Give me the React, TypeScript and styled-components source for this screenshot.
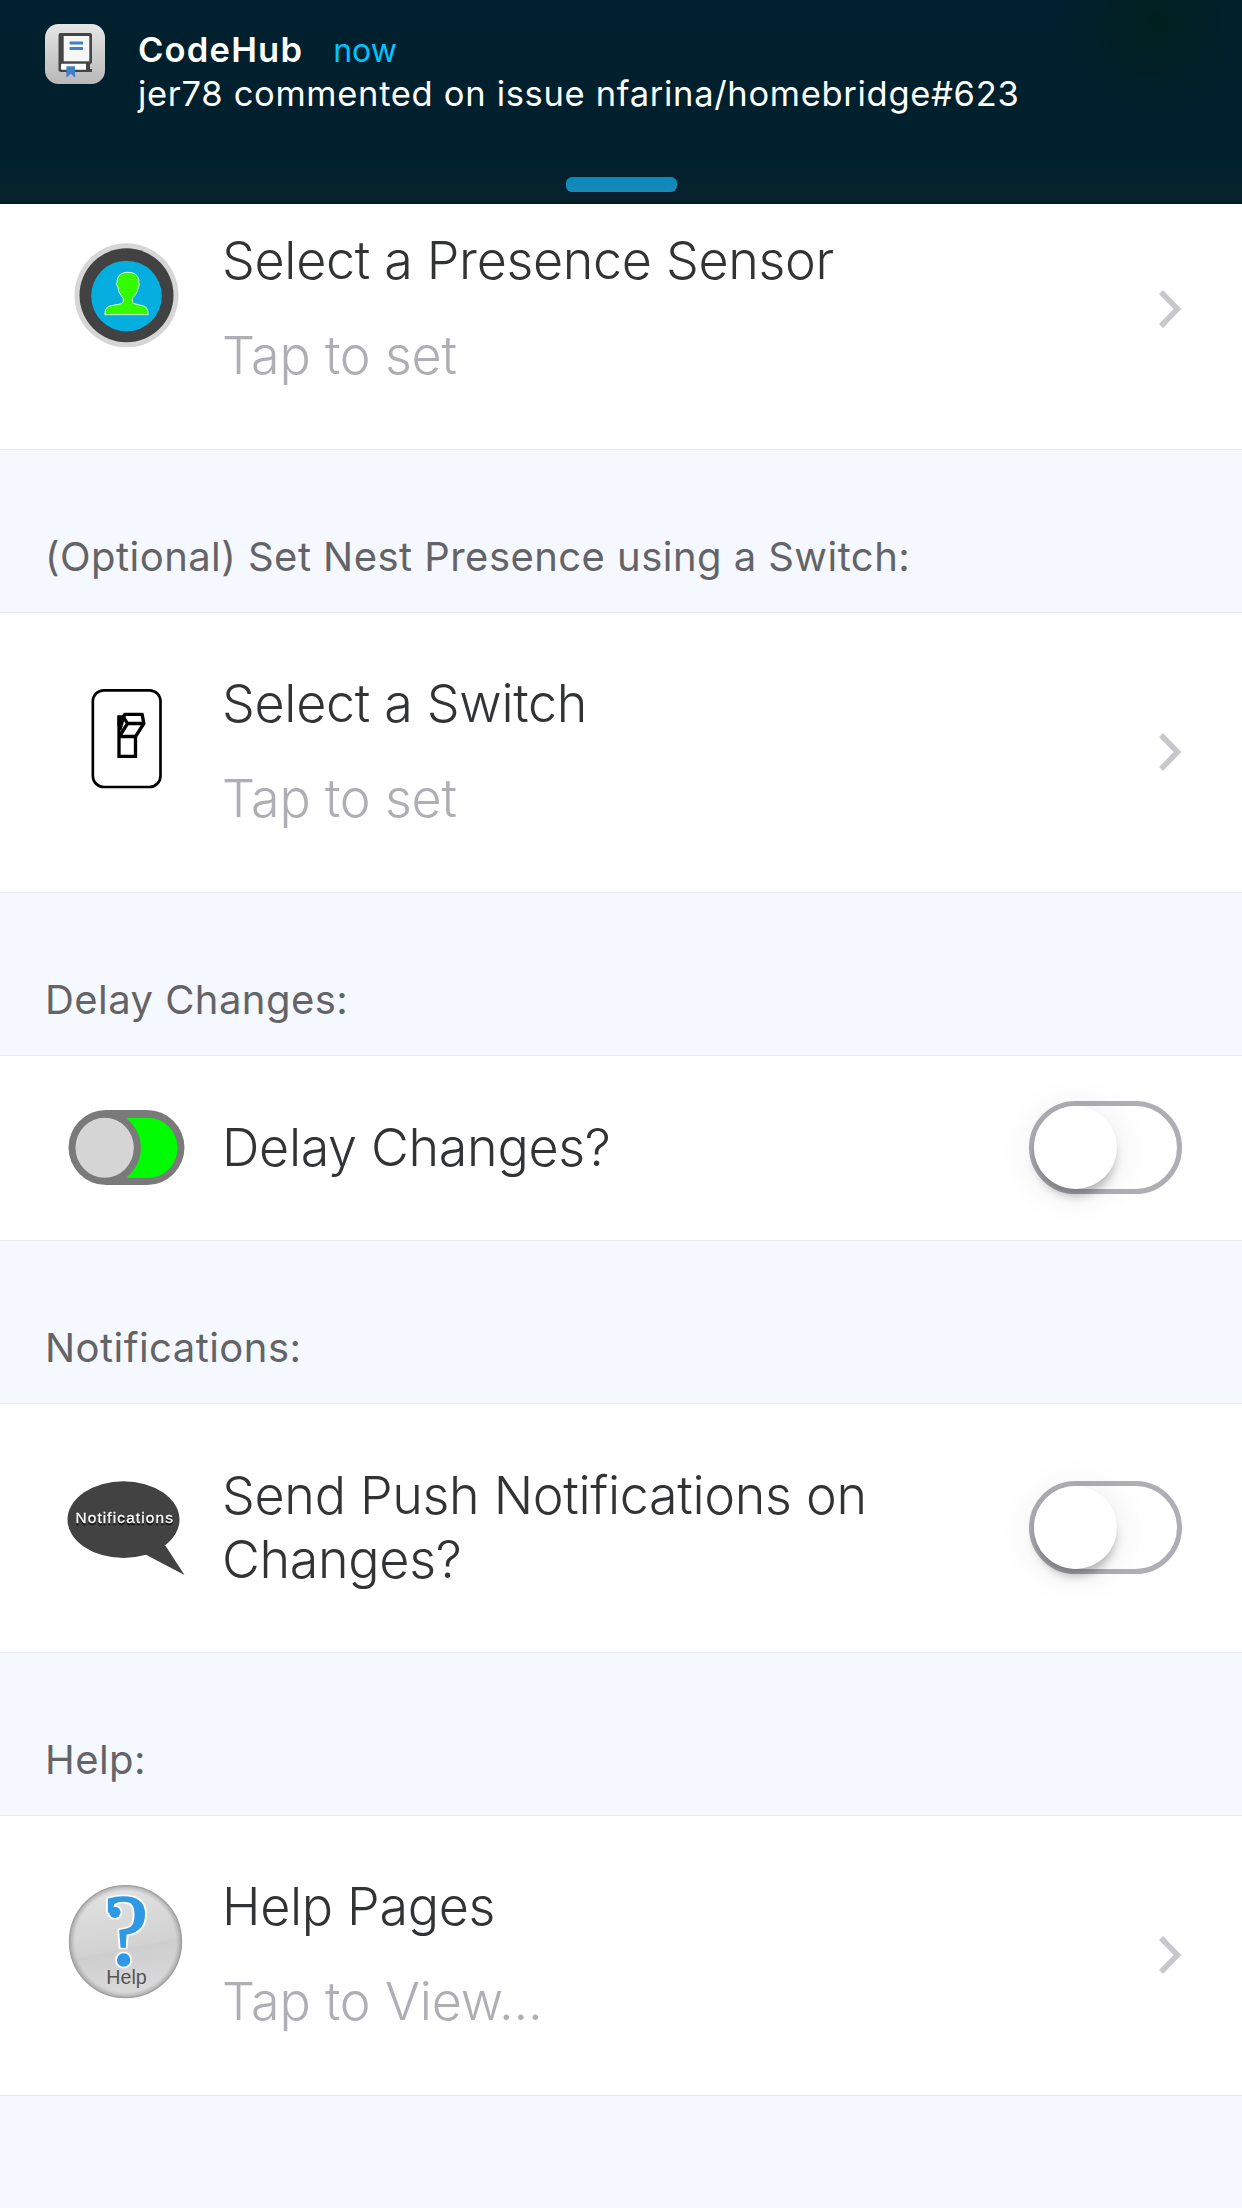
import React from "react";
import styled, { createGlobalStyle } from "styled-components";

const GlobalStyle = createGlobalStyle`
  body {
    margin: 0;
    background: #f5f8ff;
    font-family: Inter, "Liberation Sans", sans-serif;
  }
`;

const Screen = styled.main`
  width: 1242px;
  height: 2208px;
  overflow: hidden;
  background: #f5f8ff;
`;

const Banner = styled.header`
  position: relative;
  z-index: 1;
  box-sizing: border-box;
  height: 204px;
  padding: 24px 45px 12px;
  display: flex;
  flex-direction: column;
  justify-content: space-between;
  background:
    radial-gradient(circle 95px at 1157px 22px, #00201f 0%, #00202200 100%),
    linear-gradient(#00202f 0%, #00202e 75%, #07222c 98%, #001820 100%);
`;

const BannerContent = styled.div`
  display: flex;
  gap: 33px;
`;

const BannerText = styled.div`
  padding-top: 4px;
  color: #fff;
`;

const BannerLine = styled.div`
  display: flex;
  align-items: baseline;
  gap: 30px;
  font-size: 34.5px;
  line-height: 43px;
  white-space: nowrap;
`;

const AppName = styled.span`
  font-weight: 600;
  letter-spacing: 1.2px;
`;

const Time = styled.span`
  font-size: 32px;
  color: #00c3ff;
  letter-spacing: 0;
`;

const Message = styled.span`
  letter-spacing: 0.69px;
`;

const Grabber = styled.div`
  align-self: center;
  width: 111px;
  height: 15px;
  border-radius: 6px;
  background: linear-gradient(#0789bc, #1b8ab7);
`;

const Settings = styled.div`
  margin-top: -35px;
`;

const SectionHeader = styled.h2`
  box-sizing: border-box;
  height: 162px;
  margin: 0;
  padding: 0 45px 30px;
  display: flex;
  align-items: flex-end;
  font-size: 40px;
  line-height: 50px;
  font-weight: 400;
  letter-spacing: 0.45px;
  color: #646466;
`;

const Row = styled.div<{ $height: number; $lift?: number }>`
  box-sizing: border-box;
  height: ${(p) => p.$height}px;
  padding: 0 60px ${(p) => p.$lift ?? 0}px 67.5px;
  display: flex;
  align-items: center;
  background: #fff;
  border-top: 1px solid #e6eaef;
  border-bottom: 1px solid #e6eaef;
`;

const IconSlot = styled.div<{ $raised?: boolean }>`
  width: 117px;
  height: 117px;
  margin-right: 37.5px;
  margin-bottom: ${(p) => (p.$raised ? 27 : 1)}px;
  flex: none;

  svg {
    display: block;
    overflow: visible;
  }
`;

const Labels = styled.div`
  flex: 1;
  display: flex;
  flex-direction: column;
  gap: 31px;
  font-size: 52px;
  line-height: 64px;
  font-weight: 300;
`;

const Title = styled.span<{ $width?: number }>`
  max-width: ${(p) => (p.$width ? `${p.$width}px` : "none")};
  color: #323335;
  letter-spacing: -0.32px;
`;

const Hint = styled.span`
  color: #aeaeb4;
  letter-spacing: -0.2px;
`;

const Toggle = styled.button`
  box-sizing: border-box;
  width: 153px;
  height: 93px;
  margin: 0 0 2px;
  padding: 0;
  flex: none;
  border: 5px solid #aeaeb4;
  border-radius: 47px;
  background: #fff;
`;

const Knob = styled.span`
  display: block;
  width: 83px;
  height: 83px;
  border-radius: 50%;
  background: #fff;
  box-shadow:
    0 9px 10px -2px rgba(0, 0, 0, 0.26),
    0 4px 40px rgba(0, 0, 0, 0.09);
`;

const BookIcon = () => (
  <svg width="60" height="60" viewBox="0 0 60 60">
    <defs>
      <linearGradient id="tile" x1="0" y1="0" x2="0" y2="1">
        <stop offset="0" stopColor="#e6e6e6" />
        <stop offset="1" stopColor="#b8b8b8" />
      </linearGradient>
    </defs>
    <rect width="60" height="60" rx="13.5" fill="url(#tile)" />
    <path
      d="M15.5 9H45q2 0 2 2v28l-2 1v5h2v3H16q-2.500 0-2.500-2.500V11q0-2 2-2z"
      fill="#454545"
    />
    <rect x="18.700" y="12" width="25.600" height="25.300" fill="#f7f7f7" />
    <path d="M17 39.700h24v6H17q-1 0-1-1v-4q0-1 1-1z" fill="#fff" />
    <path d="M24.600 19H38M24.600 24.500H38" stroke="#3f81c6" strokeWidth="2.800" />
    <path d="M21.400 42.300h8.700v11.400l-4.300-4-4.400 4z" fill="#3f81c6" />
  </svg>
);

const PresenceIcon = () => (
  <svg width="117" height="117" viewBox="82.5 48 351 351">
    <circle cx="258" cy="223" r="156" fill="#d6d6d6" />
    <circle cx="258" cy="223" r="141" fill="#424242" />
    <circle cx="258" cy="225" r="106" fill="#04aede" />
    <path
      d="M262 154c22 0 34 10 33 30l2 5-3 9c-3 15-9 25-18 33v13c5 8 31 7 39 14 6 5 8 14 8 23H193c0-10 2-19 9-23 9-7 40-6 46-14v-13c-8-8-14-18-16-33l-5-9 3-6c0-19 11-29 32-29z"
      fill="#33fc00"
      stroke="#d8ffd8"
      strokeWidth="3"
    />
  </svg>
);

const SwitchIcon = () => (
  <svg width="117" height="117" viewBox="22.5 57 351 351">
    <rect x="97" y="88" width="203" height="290" rx="33" fill="none" stroke="#000" strokeWidth="8" />
    <g fill="none" stroke="#000" strokeWidth="10">
      <path d="M175.500 164V286H225V228" />
      <path d="M175 226.500H225L250 188 245 160H193L189 168 201 187.500H250M201 187.500L177 226" strokeLinejoin="round" />
      <path d="M191 163L178 206" />
    </g>
    <path d="M171 163H193L186 181 177 196H171z" />
  </svg>
);

const DelayIcon = () => (
  <svg width="117" height="117" viewBox="82.5 27 351 351">
    <rect x="84" y="90" width="348" height="225" rx="112.500" fill="#7a7a7a" />
    <path d="M258 114H325a86 89.500 0 0 1 0 179H258Q301 254 301 203.500 301 154 258 114z" fill="#00fc00" />
    <ellipse cx="192.500" cy="203.500" rx="87.500" ry="90" fill="#d5d5d5" />
  </svg>
);

const SpeechText = styled.text`
  font: 46px "Liberation Sans", sans-serif;
  filter: drop-shadow(0 5px 1px #000);
`;

const NotificationsIcon = () => (
  <svg width="117" height="117" viewBox="82.5 87 351 351">
    <ellipse cx="249" cy="239" rx="168" ry="115" fill="#424242" />
    <path d="M374 316L432 405 312 342z" fill="#424242" />
    <SpeechText x="105" y="249" textLength="292" fill="#fff" stroke="#fff" strokeWidth="1">
      Notifications
    </SpeechText>
  </svg>
);

const Outlined = styled.g`
  filter: drop-shadow(4px 0 0 #fff) drop-shadow(-4px 0 0 #fff) drop-shadow(0 4px 0 #fff)
    drop-shadow(0 -4px 0 #fff);
`;

const QuestionMark = styled.text`
  font: 306px "Liberation Serif", serif;
`;

const HelpCaption = styled.text`
  font: 59px "Liberation Sans", sans-serif;
`;

const HelpIcon = () => (
  <svg width="117" height="117" viewBox="82.5 66 351 351">
    <defs>
      <linearGradient id="disc" x1="0.4" y1="0" x2="0.6" y2="1">
        <stop offset="0" stopColor="#e2e2e2" />
        <stop offset="0.55" stopColor="#d2d2d2" />
        <stop offset="0.57" stopColor="#cecece" />
        <stop offset="1" stopColor="#dcdcdc" />
      </linearGradient>
      <radialGradient id="rim">
        <stop offset="0.9" stopColor="#999" stopOpacity="0" />
        <stop offset="1" stopColor="#8a8a8a" stopOpacity="0.6" />
      </radialGradient>
    </defs>
    <circle cx="255" cy="242" r="169" fill="url(#disc)" />
    <circle cx="255" cy="242" r="168" fill="url(#rim)" stroke="#a0a0a0" strokeWidth="4" />
    <Outlined fill="#3099e4">
      <QuestionMark x="256" y="313" textAnchor="middle" stroke="#3099e4" strokeWidth="4">
        ?
      </QuestionMark>
      <circle cx="223" cy="154" r="17" />
    </Outlined>
    <HelpCaption x="258" y="369" textAnchor="middle" fill="#555">
      Help
    </HelpCaption>
  </svg>
);

const Chevron = () => (
  <svg width="24" height="40" viewBox="0 0 24 40">
    <path d="M3 3L19.500 20 3 37" fill="none" stroke="#c7c7cc" strokeWidth="5.500" />
  </svg>
);

const Switch = ({ label }: { label: string }) => (
  <Toggle role="switch" aria-checked={false} aria-label={label}>
    <Knob />
  </Toggle>
);

type LinkRowProps = { icon: React.ReactNode; title: string; hint: string };

const LinkRow = ({ icon, title, hint }: LinkRowProps) => (
  <Row $height={281} $lift={2}>
    <IconSlot $raised>{icon}</IconSlot>
    <Labels>
      <Title>{title}</Title>
      <Hint>{hint}</Hint>
    </Labels>
    <Chevron />
  </Row>
);

type ToggleRowProps = { icon: React.ReactNode; title: string; height: number };

const ToggleRow = ({ icon, title, height }: ToggleRowProps) => (
  <Row $height={height}>
    <IconSlot>{icon}</IconSlot>
    <Labels>
      <Title $width={700}>{title}</Title>
    </Labels>
    <Switch label={title} />
  </Row>
);

export default function App() {
  return (
    <Screen>
      <GlobalStyle />
      <Banner>
        <BannerContent>
          <BookIcon />
          <BannerText>
            <BannerLine>
              <AppName>CodeHub</AppName>
              <Time>now</Time>
            </BannerLine>
            <BannerLine>
              <Message>jer78 commented on issue nfarina/homebridge#623</Message>
            </BannerLine>
          </BannerText>
        </BannerContent>
        <Grabber />
      </Banner>
      <Settings>
        <LinkRow icon={<PresenceIcon />} title="Select a Presence Sensor" hint="Tap to set" />
        <SectionHeader>(Optional) Set Nest Presence using a Switch:</SectionHeader>
        <LinkRow icon={<SwitchIcon />} title="Select a Switch" hint="Tap to set" />
        <SectionHeader>Delay Changes:</SectionHeader>
        <ToggleRow icon={<DelayIcon />} title="Delay Changes?" height={186} />
        <SectionHeader>Notifications:</SectionHeader>
        <ToggleRow icon={<NotificationsIcon />} title="Send Push Notifications on Changes?" height={250} />
        <SectionHeader>Help:</SectionHeader>
        <LinkRow icon={<HelpIcon />} title="Help Pages" hint="Tap to View..." />
      </Settings>
    </Screen>
  );
}
